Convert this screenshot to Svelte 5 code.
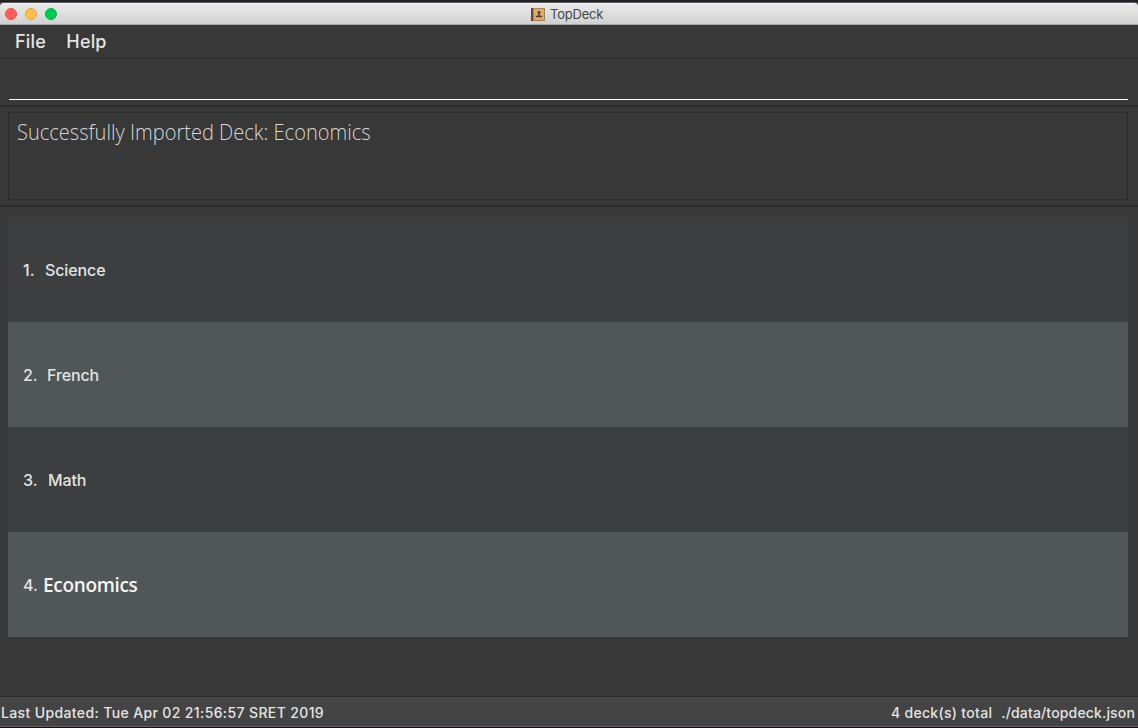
<script>
  const decks = [
    { number: '1.', name: 'Science', kind: 'science' },
    { number: '2.', name: 'French', kind: 'french' },
    { number: '3.', name: 'Math', kind: 'math' },
    { number: '4.', name: 'Economics', kind: 'economics' },
  ];
</script>

<div class="window">
  <header class="titlebar">
    <div class="controls"><i class="close"></i><i class="minimise"></i><i class="zoom"></i></div>
    <div class="title">
      <svg width="14" height="13" viewBox="0 0 14 13">
        <rect x="0" y="0" width="14" height="13" rx=".7" fill="#a57c4e" />
        <rect x="0" y="0" width="2.2" height="13" fill="#5a4a42" />
        <rect x="2.2" y="0" width=".9" height="13" fill="#b58b5c" />
        <rect x="3.1" y="0.8" width="10" height="11.2" fill="#dfae6c" />
        <circle cx="8" cy="4.6" r="1.5" fill="#55402d" />
        <path d="M7.3 5.5h1.4v1.7l2.5.8v1.2H4.8V8l2.5-.8z" fill="#55402d" />
      </svg>
      <span>TopDeck</span>
    </div>
  </header>
  <nav><span class="file">File</span><span class="help">Help</span></nav>
  <section class="command"><div class="field"></div></section>
  <section class="result"><div class="message"><span>Successfully Imported Deck: Economics</span></div></section>
  <main>
    {#each decks as deck}
      <div class="deck {deck.kind}">
        <span class="number">{deck.number}</span><span class="name">{deck.name}</span>
      </div>
    {/each}
  </main>
  <footer>
    <span class="updated">Last Updated: Tue Apr 02 21:56:57 SRET 2019</span>
    <span class="total">4 deck(s) total</span>
    <span class="path">./data/topdeck.json</span>
  </footer>
</div>

<style>
  :global(body) { margin: 0; background: #383838; }
  .window {
    box-sizing: border-box;
    width: 1138px;
    height: 728px;
    display: flex;
    flex-direction: column;
    background: #383838;
    border-top: 2px solid #222;
    border-bottom: 1px solid #1d0b13;
    color: #e4e4e4;
    font-family: Inter, sans-serif;
    white-space: nowrap;
    overflow: hidden;
  }
  .titlebar {
    box-sizing: border-box;
    height: 23px;
    flex: none;
    display: grid;
    grid-template-columns: 531px 1fr;
    align-items: center;
    border-top: 1px solid #5d5d65;
    border-bottom: 1px solid #a5a5a5;
    background: linear-gradient(#f3f3f3, #e8e8e8 12%, #d1d1d1);
    border-radius: 4px 4px 0 0;
  }
  .controls { display: flex; gap: 8px; padding-left: 5px; }
  .controls i { box-sizing: border-box; width: 12px; height: 12px; border-radius: 50%; }
  .close { background: #ff5f5b; border: 1px solid #e9504d; }
  .minimise { background: #ffbe4f; border: 1px solid #e1a541; }
  .zoom { background: #00ca56; border: 1px solid #00b545; }
  .title { display: flex; align-items: center; gap: 5px; color: #454545; font-size: 13px; line-height: 20px; }
  .title svg { margin-top: 1px; }
  .title span { letter-spacing: -.2px; }
  nav {
    box-sizing: border-box;
    height: 34px;
    flex: none;
    display: flex;
    padding-left: 15px;
    gap: 20.5px;
    border-bottom: 1px solid #2b2b2b;
    font-size: 18px;
    font-weight: 500;
    letter-spacing: .15px;
    line-height: 33px;
  }
  .command {
    box-sizing: border-box;
    height: 48px;
    flex: none;
    padding: 0 10px 0 9px;
    border-bottom: 2px solid #2b2b2b;
  }
  .field { box-sizing: border-box; height: 41px; border-bottom: 1px solid #fff; }
  .result {
    box-sizing: border-box;
    height: 100px;
    flex: none;
    padding: 5px 10px 5px 8px;
    border-bottom: 2px solid #2b2b2b;
  }
  .message {
    box-sizing: border-box;
    height: 88px;
    padding: 3px 8px;
    border: 1px solid #2b2b2b;
    color: #d6d6d6;
    font: 300 22px/30px "Open Sans", sans-serif;
  }
  .message span { display: inline-block; transform: scaleX(.912); transform-origin: left; }
  main { flex: 1; padding: 10px 10px 0 8px; }
  .deck {
    box-sizing: border-box;
    height: 105px;
    display: flex;
    align-items: center;
    padding: 0 0 0 15px;
    background: #3c3e3f;
    font-size: 16px;
    font-weight: 500;
    line-height: 20px;
  }
  .deck:nth-child(even) { background: #515658; }
  .name { letter-spacing: -.12px; }
  .number { width: 22px; }
  .french .number { width: 24px; }
  .math .number { width: 25px; }
  .economics .number { width: 20px; }
  .economics .name { font: 600 19px/24px "Open Sans", sans-serif; letter-spacing: -.32px; color: #f4f4f4; }
  footer {
    box-sizing: border-box;
    height: 31px;
    flex: none;
    display: flex;
    padding: 0 3px 0 1px;
    border-top: 1px solid #2a2a2a;
    border-bottom: 1px solid #606060;
    background: #444;
    font-size: 14px;
    font-weight: 500;
    line-height: 32px;
  }
  .updated { letter-spacing: .37px; }
  .total { margin-left: auto; margin-right: 9px; letter-spacing: .31px; }
  .path { letter-spacing: .16px; }
</style>
